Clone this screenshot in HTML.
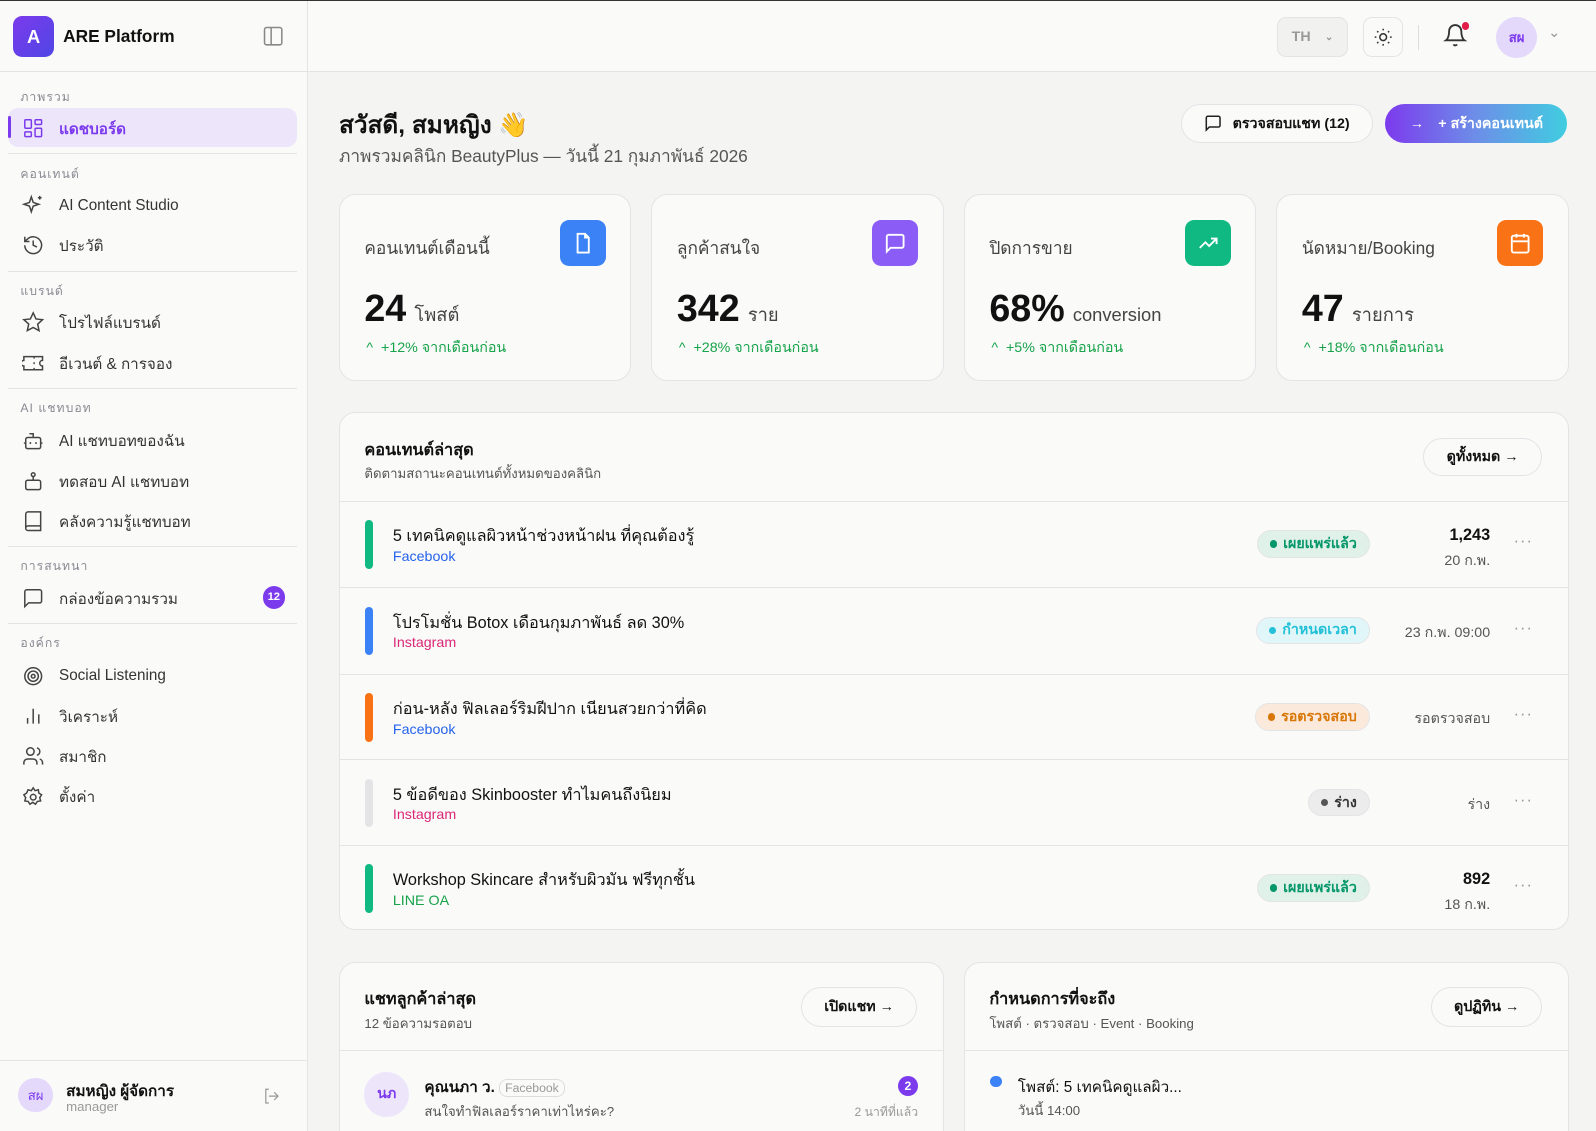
<!DOCTYPE html><html><head><meta charset="utf-8"><style>
*{box-sizing:border-box;margin:0;padding:0}
html,body{width:1596px;height:1131px;overflow:hidden;background:#f4f4f3}
body{font-family:"Liberation Sans","Noto Sans CJK SC",sans-serif;color:#111}
#w{position:relative;width:1568px;height:1112px;zoom:1.01786;border-top:1px solid #333}
.a{position:absolute}
.sb{left:0;top:0;width:303px;height:1112px;background:#fafaf9;border-right:1px solid #e4e4e7}
.lbl{position:absolute;left:20px;font-size:12px;color:#8a8a93;letter-spacing:1px}
.it{position:absolute;left:22px;font-size:15px;color:#333;display:flex;align-items:center;gap:14px;height:24px}
.it svg{width:22px;height:22px;stroke:#444;fill:none;stroke-width:1.6}
.dv{position:absolute;left:8px;width:284px;height:1px;background:#e4e4e7}
.card{position:absolute;background:#fafaf9;border:1px solid #e4e4e7;border-radius:16px}
.ic{position:absolute;right:24px;top:24px;width:45px;height:45px;border-radius:9px;display:flex;align-items:center;justify-content:center}
.ic svg{width:22px;height:22px;stroke:#fff;fill:none;stroke-width:2}
.st .t{position:absolute;left:24px;top:38px;font-size:17px;color:#444}
.st .n{position:absolute;left:24px;top:90px;font-size:37px;font-weight:bold}
.st .n span{font-size:18px;font-weight:normal;color:#444;margin-left:8px}
.st .g{position:absolute;left:26px;top:139px;font-size:14px;color:#16a34a}
.row{position:absolute;left:0;width:100%;height:85px;border-top:1px solid #e4e4e7}
.bar{position:absolute;left:25px;top:18px;width:7px;height:48px;border-radius:4px}
.rt{position:absolute;left:52px;top:21px;font-size:16px;color:#111}
.rs{position:absolute;left:52px;top:46px;font-size:14px}
.pill{position:absolute;top:28px;height:27px;border-radius:14px;font-size:14px;display:flex;align-items:center;padding:0 12px;gap:6px;font-weight:bold;border:1px solid #e4e4e7}
.pill i{width:7px;height:7px;border-radius:50%;display:inline-block}
.rv{position:absolute;right:76px;text-align:right;font-size:14px;color:#555}
.dots{position:absolute;right:34px;top:30px;color:#999;font-size:16px;letter-spacing:1px}
.btn{position:absolute;border:1px solid #e4e4e7;border-radius:20px;background:#fafaf9;font-size:14px;font-weight:bold;display:flex;align-items:center;justify-content:center}
</style></head><body><div id="w">
<div class="a sb">
<div class="a" style="left:13px;top:15px;width:40px;height:40px;border-radius:9px;background:linear-gradient(135deg,#7c3aed,#4f46e5);color:#fff;font-weight:bold;font-size:18px;display:flex;align-items:center;justify-content:center">A</div>
<div class="a" style="left:62px;top:25px;font-size:17px;font-weight:bold">ARE Platform</div>
<svg class="a" style="left:258px;top:25px" width="20" height="20" viewBox="0 0 20 20" fill="none" stroke="#888" stroke-width="1.5"><rect x="1.5" y="1.5" width="17" height="17" rx="2"/><line x1="8" y1="2" x2="8" y2="18"/></svg>
<div class="a" style="left:0;top:69px;width:302px;height:1px;background:#e4e4e7"></div>
<div class="lbl" style="top:85px">ภาพรวม</div>
<div class="a" style="left:8px;top:105px;width:284px;height:38px;border-radius:10px;background:#ede6fb"></div>
<div class="a" style="left:8px;top:113px;width:3px;height:22px;background:#7c3aed;border-radius:2px"></div>
<div class="it" style="top:113px;color:#7c3aed;font-weight:bold"><svg viewBox="0 0 24 24" style="stroke:#7c3aed"><rect x="3" y="3" width="7" height="9" rx="1"/><rect x="14" y="3" width="7" height="5" rx="1"/><rect x="14" y="12" width="7" height="9" rx="1"/><rect x="3" y="16" width="7" height="5" rx="1"/></svg>แดชบอร์ด</div>
<div class="dv" style="top:149px"></div>
<div class="lbl" style="top:161px">คอนเทนต์</div>
<div class="it" style="top:189px"><svg viewBox="0 0 24 24"><path d="M10 3l2 6 6 2-6 2-2 6-2-6-6-2 6-2z"/><path d="M19 2v4M17 4h4"/></svg>AI Content Studio</div>
<div class="it" style="top:228px"><svg viewBox="0 0 24 24"><path d="M3 12a9 9 0 1 0 3-6.7L3 8"/><path d="M3 3v5h5M12 7v5l4 2"/></svg>ประวัติ</div>
<div class="dv" style="top:265px"></div>
<div class="lbl" style="top:276px">แบรนด์</div>
<div class="it" style="top:304px"><svg viewBox="0 0 24 24"><path d="M12 2l3 6.5 7 .8-5.2 4.8 1.5 7L12 17.6 5.7 21l1.5-7L2 9.3l7-.8z"/></svg>โปรไฟล์แบรนด์</div>
<div class="it" style="top:344px"><svg viewBox="0 0 24 24"><path d="M2 9a3 3 0 0 0 0 6v4h20v-4a3 3 0 0 1 0-6V5H2z"/><path d="M13 5v2M13 17v2M13 11v2"/></svg>อีเวนต์ &amp; การจอง</div>
<div class="dv" style="top:380px"></div>
<div class="lbl" style="top:391px">AI แชทบอท</div>
<div class="it" style="top:420px"><svg viewBox="0 0 24 24"><rect x="4" y="8" width="16" height="12" rx="2"/><path d="M12 8V4H8M2 14h2M20 14h2M9 13v2M15 13v2"/></svg>AI แชทบอทของฉัน</div>
<div class="it" style="top:460px"><svg viewBox="0 0 24 24"><rect x="4" y="11" width="16" height="10" rx="2"/><circle cx="12" cy="5" r="2"/><path d="M12 7v4M8 16h0M16 16h0"/></svg>ทดสอบ AI แชทบอท</div>
<div class="it" style="top:499px"><svg viewBox="0 0 24 24"><path d="M4 19.5V4.5A2.5 2.5 0 0 1 6.5 2H20v20H6.5A2.5 2.5 0 0 1 4 19.5zM4 19.5A2.5 2.5 0 0 1 6.5 17H20"/></svg>คลังความรู้แชทบอท</div>
<div class="dv" style="top:535px"></div>
<div class="lbl" style="top:546px">การสนทนา</div>
<div class="it" style="top:575px"><svg viewBox="0 0 24 24"><path d="M21 15a2 2 0 0 1-2 2H7l-4 4V5a2 2 0 0 1 2-2h14a2 2 0 0 1 2 2z"/></svg>กล่องข้อความรวม</div>
<div class="a" style="left:258px;top:575px;width:22px;height:22px;border-radius:50%;background:#7c3aed;color:#fff;font-size:11px;font-weight:bold;display:flex;align-items:center;justify-content:center">12</div>
<div class="dv" style="top:611px"></div>
<div class="lbl" style="top:622px">องค์กร</div>
<div class="it" style="top:651px"><svg viewBox="0 0 24 24"><circle cx="12" cy="12" r="9"/><circle cx="12" cy="12" r="5.5"/><circle cx="12" cy="12" r="2"/></svg>Social Listening</div>
<div class="it" style="top:691px"><svg viewBox="0 0 24 24"><path d="M6 20v-6M12 20V4M18 20v-10"/></svg>วิเคราะห์</div>
<div class="it" style="top:730px"><svg viewBox="0 0 24 24"><circle cx="9" cy="7" r="4"/><path d="M2 21v-2a4 4 0 0 1 4-4h6a4 4 0 0 1 4 4v2M16 3.1a4 4 0 0 1 0 7.8M22 21v-2a4 4 0 0 0-3-3.9"/></svg>สมาชิก</div>
<div class="it" style="top:770px"><svg viewBox="0 0 24 24"><circle cx="12" cy="12" r="3"/><path d="M12 2l2 3 3.5-1 .5 3.5 3 2-2 3 1 3.5-3.5.5-2 3-3-2-3 2-2-3-3.5-.5 1-3.5-2-3 3-2L6.5 4 10 5z"/></svg>ตั้งค่า</div>
<div class="a" style="left:0;top:1040px;width:302px;height:1px;background:#e4e4e7"></div>
<div class="a" style="left:18px;top:1058px;width:34px;height:34px;border-radius:50%;background:#e4d8fb;color:#7c3aed;font-size:13px;display:flex;align-items:center;justify-content:center">สผ</div>
<div class="a" style="left:65px;top:1058px;font-size:15px;font-weight:bold">สมหญิง ผู้จัดการ</div>
<div class="a" style="left:65px;top:1079px;font-size:13px;color:#999">manager</div>
<svg class="a" style="left:257px;top:1067px" width="18" height="18" viewBox="0 0 24 24" fill="none" stroke="#999" stroke-width="1.6"><path d="M9 21H5V3h4M16 17l5-5-5-5M21 12H9"/></svg>
</div>
<div class="a" style="left:303px;top:0;width:1265px;height:70px;background:#fafaf9;border-bottom:1px solid #e4e4e7"></div>
<div class="a" style="left:1255px;top:16px;width:69px;height:39px;border:1px solid #e4e4e7;border-radius:9px;background:#f1f1f0;color:#999;font-weight:bold;font-size:14px;display:flex;align-items:center;padding-left:13px">TH <span style="margin-left:14px;font-size:10px">⌄</span></div>
<div class="a" style="left:1339px;top:16px;width:39px;height:39px;border:1px solid #e4e4e7;border-radius:9px;display:flex;align-items:center;justify-content:center"><svg width="20" height="20" viewBox="0 0 24 24" fill="none" stroke="#333" stroke-width="1.8"><circle cx="12" cy="12" r="4"/><path d="M12 2v2M12 20v2M2 12h2M20 12h2M4.9 4.9l1.4 1.4M17.7 17.7l1.4 1.4M4.9 19.1l1.4-1.4M17.7 6.3l1.4-1.4"/></svg></div>
<div class="a" style="left:1393px;top:24px;width:1px;height:24px;background:#ddd"></div>
<svg class="a" style="left:1418px;top:22px" width="24" height="24" viewBox="0 0 24 24" fill="none" stroke="#333" stroke-width="1.8"><path d="M6 8a6 6 0 0 1 12 0c0 7 3 9 3 9H3s3-2 3-9M10.3 21a1.9 1.9 0 0 0 3.4 0"/></svg>
<div class="a" style="left:1436px;top:21px;width:7px;height:7px;border-radius:50%;background:#e11d48"></div>
<div class="a" style="left:1470px;top:16px;width:40px;height:40px;border-radius:50%;background:#e4d8fb;color:#7c3aed;font-size:13px;font-weight:bold;display:flex;align-items:center;justify-content:center">สผ</div>
<div class="a" style="left:1521px;top:24px;color:#999;font-size:14px">⌄</div>
<div class="a" style="left:333px;top:102px;font-size:24px;font-weight:bold">สวัสดี, สมหญิง 👋</div>
<div class="a" style="left:333px;top:139px;font-size:17px;color:#555">ภาพรวมคลินิก BeautyPlus — วันนี้ 21 กุมภาพันธ์ 2026</div>
<div class="btn" style="left:1160px;top:101px;width:189px;height:39px;gap:10px"><svg width="18" height="18" viewBox="0 0 24 24" fill="none" stroke="#222" stroke-width="2"><path d="M21 15a2 2 0 0 1-2 2H7l-4 4V5a2 2 0 0 1 2-2h14a2 2 0 0 1 2 2z"/></svg>ตรวจสอบแชท (12)</div>
<div class="a" style="left:1361px;top:101px;width:179px;height:39px;border-radius:20px;background:linear-gradient(90deg,#7c3aed,#6d8ee8,#40cde0);color:#fff;font-size:14px;font-weight:bold;display:flex;align-items:center;justify-content:center;gap:14px">→ <span>+ สร้างคอนเทนต์</span></div>
<div class="card st" style="left:333px;top:190px;width:287px;height:183px"><div class="t">คอนเทนต์เดือนนี้</div><div class="ic" style="background:#3b82f6"><svg viewBox="0 0 24 24"><path d="M14 2H6v20h12V6zM14 2v4h4"/></svg></div><div class="n">24<span>โพสต์</span></div><div class="g">^ &nbsp;+12% จากเดือนก่อน</div></div>
<div class="card st" style="left:640px;top:190px;width:287px;height:183px"><div class="t">ลูกค้าสนใจ</div><div class="ic" style="background:#8b5cf6"><svg viewBox="0 0 24 24"><path d="M21 15a2 2 0 0 1-2 2H7l-4 4V5a2 2 0 0 1 2-2h14a2 2 0 0 1 2 2z"/></svg></div><div class="n">342<span>ราย</span></div><div class="g">^ &nbsp;+28% จากเดือนก่อน</div></div>
<div class="card st" style="left:947px;top:190px;width:287px;height:183px"><div class="t">ปิดการขาย</div><div class="ic" style="background:#10b981"><svg viewBox="0 0 24 24"><path d="M3 17l6-6 4 4 8-8M15 7h6v6"/></svg></div><div class="n">68%<span>conversion</span></div><div class="g">^ &nbsp;+5% จากเดือนก่อน</div></div>
<div class="card st" style="left:1254px;top:190px;width:287px;height:183px"><div class="t">นัดหมาย/Booking</div><div class="ic" style="background:#f97316"><svg viewBox="0 0 24 24"><rect x="3" y="4" width="18" height="18" rx="2"/><path d="M16 2v4M8 2v4M3 10h18"/></svg></div><div class="n">47<span>รายการ</span></div><div class="g">^ &nbsp;+18% จากเดือนก่อน</div></div>
<div class="card" style="left:333px;top:404px;width:1208px;height:509px;overflow:hidden">
<div class="a" style="left:24px;top:23px;font-size:16px;font-weight:bold">คอนเทนต์ล่าสุด</div>
<div class="a" style="left:24px;top:49px;font-size:13px;color:#555">ติดตามสถานะคอนเทนต์ทั้งหมดของคลินิก</div>
<div class="btn" style="right:25px;top:24px;width:117px;height:38px">ดูทั้งหมด →</div>
<div class="row" style="top:86px"><div class="bar" style="background:#10b981"></div><div class="rt">5 เทคนิคดูแลผิวหน้าช่วงหน้าฝน ที่คุณต้องรู้</div><div class="rs" style="color:#2563eb">Facebook</div><div class="pill" style="right:194px;background:#dff1e8;color:#059669"><i style="background:#059669"></i>เผยแพร่แล้ว</div><div class="rv" style="top:24px;color:#111;font-weight:bold;font-size:16px">1,243</div><div class="rv" style="top:47px">20 ก.พ.</div><div class="dots">···</div></div>
<div class="row" style="top:171px"><div class="bar" style="background:#3b82f6"></div><div class="rt">โปรโมชั่น Botox เดือนกุมภาพันธ์ ลด 30%</div><div class="rs" style="color:#db2777">Instagram</div><div class="pill" style="right:194px;background:#e0f6f9;color:#22c1d8"><i style="background:#22c1d8"></i>กำหนดเวลา</div><div class="rv" style="top:33px">23 ก.พ. 09:00</div><div class="dots">···</div></div>
<div class="row" style="top:256px"><div class="bar" style="background:#f97316"></div><div class="rt">ก่อน-หลัง ฟิลเลอร์ริมฝีปาก เนียนสวยกว่าที่คิด</div><div class="rs" style="color:#2563eb">Facebook</div><div class="pill" style="right:194px;background:#fbeadb;color:#d97706"><i style="background:#d97706"></i>รอตรวจสอบ</div><div class="rv" style="top:33px">รอตรวจสอบ</div><div class="dots">···</div></div>
<div class="row" style="top:340px"><div class="bar" style="background:#e4e4e7"></div><div class="rt">5 ข้อดีของ Skinbooster ทำไมคนถึงนิยม</div><div class="rs" style="color:#db2777">Instagram</div><div class="pill" style="right:194px;background:#ececec;color:#333"><i style="background:#555"></i>ร่าง</div><div class="rv" style="top:33px">ร่าง</div><div class="dots">···</div></div>
<div class="row" style="top:424px"><div class="bar" style="background:#10b981"></div><div class="rt">Workshop Skincare สำหรับผิวมัน ฟรีทุกชั้น</div><div class="rs" style="color:#16a34a">LINE OA</div><div class="pill" style="right:194px;background:#dff1e8;color:#059669"><i style="background:#059669"></i>เผยแพร่แล้ว</div><div class="rv" style="top:24px;color:#111;font-weight:bold;font-size:16px">892</div><div class="rv" style="top:47px">18 ก.พ.</div><div class="dots">···</div></div>
</div>
<div class="card" style="left:333px;top:944px;width:594px;height:220px">
<div class="a" style="left:24px;top:23px;font-size:16px;font-weight:bold">แชทลูกค้าล่าสุด</div>
<div class="a" style="left:24px;top:49px;font-size:13px;color:#555">12 ข้อความรอตอบ</div>
<div class="btn" style="right:25px;top:24px;width:114px;height:39px">เปิดแชท →</div>
<div class="a" style="left:0;top:86px;width:100%;height:1px;background:#e4e4e7"></div>
<div class="a" style="left:24px;top:107px;width:44px;height:44px;border-radius:50%;background:#ede6fb;color:#7c3aed;font-size:14px;font-weight:bold;display:flex;align-items:center;justify-content:center">นภ</div>
<div class="a" style="left:83px;top:109px;font-size:15px;font-weight:bold">คุณนภา ว. <span style="font-size:12px;font-weight:normal;color:#999;border:1px solid #ddd;border-radius:8px;padding:1px 5px">Facebook</span></div>
<div class="a" style="left:83px;top:136px;font-size:13px;color:#555">สนใจทำฟิลเลอร์ราคาเท่าไหร่คะ?</div>
<div class="a" style="right:24px;top:111px;width:20px;height:20px;border-radius:50%;background:#7c3aed;color:#fff;font-size:12px;font-weight:bold;display:flex;align-items:center;justify-content:center">2</div>
<div class="a" style="right:24px;top:138px;font-size:12px;color:#999">2 นาทีที่แล้ว</div>
</div>
<div class="card" style="left:947px;top:944px;width:594px;height:220px">
<div class="a" style="left:24px;top:23px;font-size:16px;font-weight:bold">กำหนดการที่จะถึง</div>
<div class="a" style="left:24px;top:49px;font-size:13px;color:#555">โพสต์ · ตรวจสอบ · Event · Booking</div>
<div class="btn" style="right:25px;top:24px;width:109px;height:39px">ดูปฏิทิน →</div>
<div class="a" style="left:0;top:86px;width:100%;height:1px;background:#e4e4e7"></div>
<div class="a" style="left:25px;top:111px;width:11px;height:11px;border-radius:50%;background:#3b82f6"></div>
<div class="a" style="left:52px;top:109px;font-size:15px">โพสต์: 5 เทคนิคดูแลผิว...</div>
<div class="a" style="left:52px;top:135px;font-size:13px;color:#555">วันนี้ 14:00</div>
</div>
</div></body></html>
